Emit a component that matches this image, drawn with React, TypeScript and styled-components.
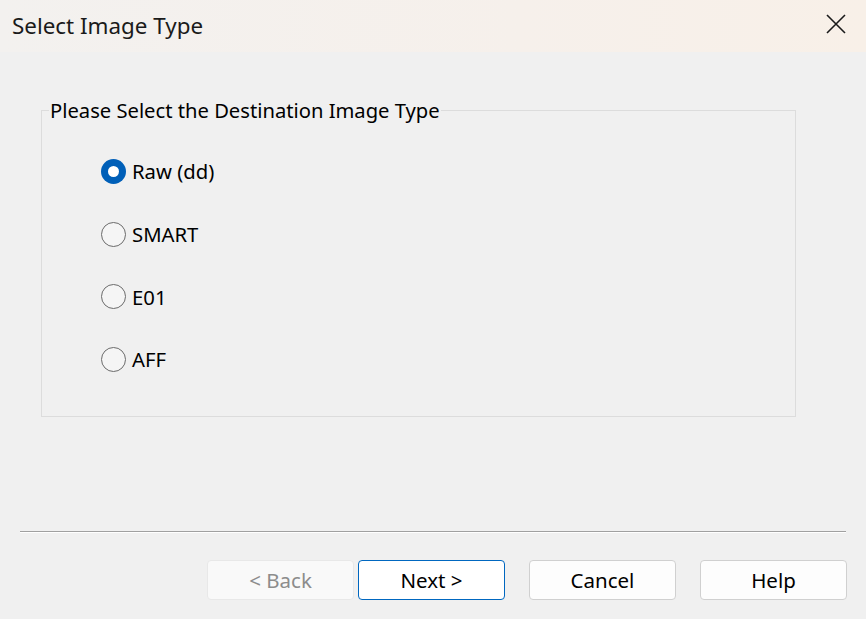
import React, { useState } from 'react';
import styled, { createGlobalStyle } from 'styled-components';

const GlobalStyle = createGlobalStyle`
  html, body {
    margin: 0;
    padding: 0;
    background: #f0f0f0;
  }
  * {
    box-sizing: border-box;
  }
`;

const Window = styled.div`
  width: 866px;
  height: 619px;
  display: flex;
  flex-direction: column;
  background: #f0f0f0;
  font-family: "Noto Sans", "Liberation Sans", sans-serif;
  color: #000000;
  overflow: hidden;
`;

const TitleBar = styled.div`
  height: 52px;
  flex-shrink: 0;
  display: flex;
  align-items: center;
  justify-content: space-between;
  padding-left: 12px;
  background: linear-gradient(90deg, #f3f1ef 0%, #f6f0eb 60%, #f8f0e8 100%);
`;

const Title = styled.span`
  font-size: 22.4px;
  color: #1a1a1a;
  margin-top: -1px;
`;

const CloseButton = styled.button`
  width: 58px;
  height: 52px;
  border: none;
  background: transparent;
  display: flex;
  align-items: center;
  justify-content: center;
  padding: 0 2px 5px 0;
  cursor: pointer;
`;

const Body = styled.div`
  flex: 1;
  display: flex;
  flex-direction: column;
  padding: 44px 70px 0 41px;
`;

const GroupBox = styled.fieldset`
  margin: 0;
  height: 321px;
  border: 1px solid #dcdcdc;
  padding: 0;
  display: flex;
  flex-direction: column;
`;

const Legend = styled.legend`
  font-size: 20.2px;
  line-height: 28px;
  padding: 0 1px;
  margin-left: 7px;
`;

const RadioList = styled.div`
  display: flex;
  flex-direction: column;
  padding: 16px 0 0 59px;
`;

const RadioRow = styled.label`
  height: 62.7px;
  display: flex;
  align-items: center;
  gap: 6px;
  font-size: 20.3px;
  cursor: pointer;
`;

const RadioCircle = styled.span<{ checked: boolean }>`
  width: 25px;
  height: 25px;
  border-radius: 50%;
  flex-shrink: 0;
  display: flex;
  align-items: center;
  justify-content: center;
  background: ${p => (p.checked ? '#005fb8' : '#f5f5f5')};
  border: ${p => (p.checked ? 'none' : '1.5px solid #6b6b6b')};

  &::after {
    content: '';
    display: ${p => (p.checked ? 'block' : 'none')};
    width: 11px;
    height: 11px;
    border-radius: 50%;
    background: #ffffff;
  }
`;

const Footer = styled.div`
  height: 88px;
  flex-shrink: 0;
  display: flex;
  flex-direction: column;
  padding: 0 20px 0 20px;
`;

const Separator = styled.div`
  border-top: 1px solid #a0a0a0;
  border-bottom: 1px solid #ffffff;
`;

const ButtonRow = styled.div`
  display: flex;
  justify-content: flex-end;
  padding-top: 27px;
  margin-right: -1px;
`;

const Button = styled.button<{ variant?: 'default' | 'primary' | 'disabled'; gapLeft?: number }>`
  width: 147px;
  height: 40px;
  margin-left: ${p => p.gapLeft ?? 0}px;
  border-radius: 4px;
  font-family: "Noto Sans", "Liberation Sans", sans-serif;
  font-size: 20.5px;
  padding: 0;
  cursor: ${p => (p.variant === 'disabled' ? 'default' : 'pointer')};
  color: ${p => (p.variant === 'disabled' ? '#8c8c8c' : '#000000')};
  background: ${p => (p.variant === 'disabled' ? '#f9f9f9' : p.variant === 'primary' ? '#ffffff' : '#fdfdfd')};
  border: 1px solid
    ${p => (p.variant === 'primary' ? '#0067c0' : p.variant === 'disabled' ? '#e8e8e8' : '#d0d0d0')};
`;

const options = ['Raw (dd)', 'SMART', 'E01', 'AFF'];

export default function App() {
  const [selected, setSelected] = useState('Raw (dd)');

  return (
    <>
      <GlobalStyle />
      <Window>
        <TitleBar>
          <Title>Select Image Type</Title>
          <CloseButton aria-label="Close">
            <svg width="20" height="20" viewBox="0 0 20 20">
              <path d="M1 1 L19 19 M19 1 L1 19" stroke="#1a1a1a" strokeWidth="1.6" fill="none" />
            </svg>
          </CloseButton>
        </TitleBar>
        <Body>
          <GroupBox>
            <Legend>Please Select the Destination Image Type</Legend>
            <RadioList>
              {options.map(opt => (
                <RadioRow key={opt} onClick={() => setSelected(opt)}>
                  <RadioCircle checked={selected === opt} />
                  {opt}
                </RadioRow>
              ))}
            </RadioList>
          </GroupBox>
        </Body>
        <Footer>
          <Separator />
          <ButtonRow>
            <Button variant="disabled" disabled>&lt; Back</Button>
            <Button variant="primary" gapLeft={4}>Next &gt;</Button>
            <Button gapLeft={24}>Cancel</Button>
            <Button gapLeft={24}>Help</Button>
          </ButtonRow>
        </Footer>
      </Window>
    </>
  );
}
